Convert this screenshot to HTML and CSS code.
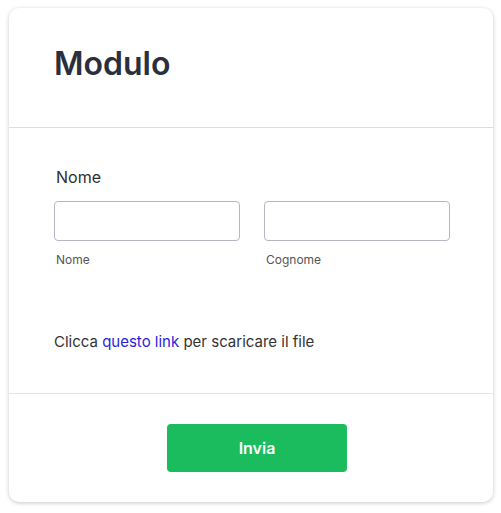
FILE: index.html
```html
<!DOCTYPE html>
<html lang="it">
<head>
<meta charset="utf-8">
<title>Modulo</title>
<link rel="stylesheet" href="styles.css">
</head>
<body>
<div class="card">
  <div class="header">
    <h1 class="title">Modulo</h1>
  </div>
  <div class="content">
    <div class="field-label">Nome</div>
    <div class="row">
      <div class="col">
        <input class="input" type="text">
        <div class="sub">Nome</div>
      </div>
      <div class="col">
        <input class="input" type="text">
        <div class="sub">Cognome</div>
      </div>
    </div>
    <p class="text">Clicca <a class="link" href="#">questo link</a> per scaricare il file</p>
  </div>
  <div class="footer">
    <button class="btn" type="button">Invia</button>
  </div>
</div>
</body>
</html>
```
FILE: styles.css
```css
* { box-sizing: border-box; }
html, body { margin: 0; padding: 0; background: #fff; }
body {
  padding: 8px 8px 8px 9px;
  font-family: Inter, "Noto Sans", sans-serif;
  color: #333;
}
.card {
  width: 484px;
  height: 494px;
  border-radius: 10px;
  background: #fff;
  box-shadow: 0 1px 4px rgba(0,0,0,0.22);
  display: flex;
  flex-direction: column;
}
.header {
  padding: 38px 44px 0 45px;
  border-bottom: 1px solid #dcdce4;
  height: 120px;
}
.title {
  margin: 0;
  font-size: 32px;
  line-height: 36px;
  font-weight: 600;
  color: #2b2f3c;
}
.content {
  padding: 37px 42px 41px 45px;
  border-bottom: 1px solid #e4e4ec;
}
.field-label {
  font-size: 16px;
  line-height: 24px;
  font-weight: 400;
  color: #2e2e2e;
  padding-left: 2px;
}
.row {
  display: flex;
  gap: 24px;
  margin-top: 12px;
}
.col { width: 186px; }
.input {
  display: block;
  width: 186px;
  height: 40px;
  border: 1px solid #b4b6c6;
  border-radius: 4px;
  background: #fff;
  margin: 0;
}
.sub {
  margin-top: 11px;
  font-size: 12px;
  line-height: 16px;
  color: #555;
  padding-left: 2px;
}
.text {
  margin: 64px 0 0;
  font-size: 15px;
  line-height: 20px;
  color: #333;
}
.link { color: #2a1edb; text-decoration: none; }
.footer {
  flex: 1;
  display: flex;
  justify-content: center;
  align-items: flex-start;
  padding-top: 30px;
  padding-left: 12px;
}
.btn {
  width: 180px;
  height: 48px;
  border: none;
  border-radius: 4px;
  background: #1abc5d;
  color: #fff;
  font-family: Inter, "Noto Sans", sans-serif;
  font-size: 16px;
  font-weight: 600;
}
```
